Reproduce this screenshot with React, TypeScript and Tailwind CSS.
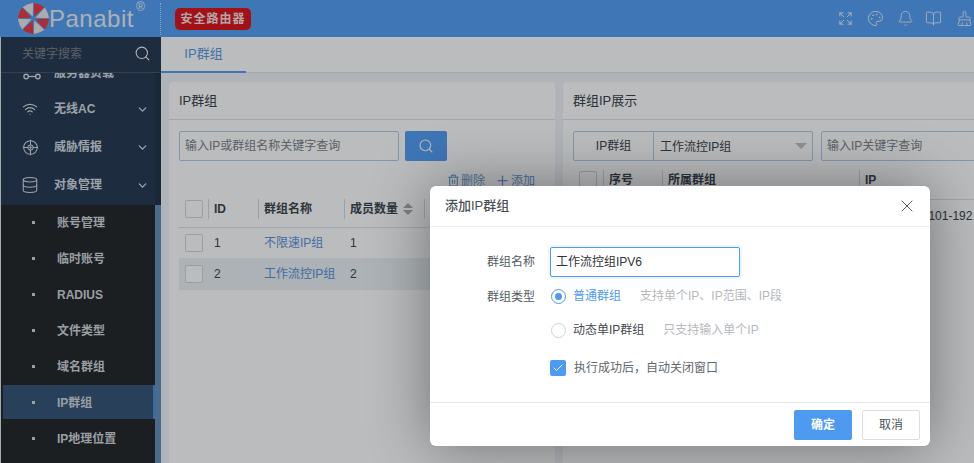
import { BookOpen, Bell, BrushCleaning, ChevronDown, Check, Database, Expand, Palette, Plus, Search, Trash2, Wifi, X } from "lucide-react";

const FONT = "font-['Liberation_Sans','Noto_Sans_CJK_SC',sans-serif]";

const Logo = () => (
  <svg viewBox="-16 -16 32 32" className="w-[31px] h-[31px]">
    {[0, 45, 90, 135, 180, 225, 270, 315].map((a, i) => (
      <path
        key={a}
        transform={`rotate(${a - 22.5})`}
        d="M0 -2.2 L-6 -15 Q0 -16.5 6 -15 Z"
        fill={i % 2 === 0 ? "#e8e8ea" : "#f03a42"}
      />
    ))}
  </svg>
);

const TargetIcon = () => (
  <svg viewBox="0 0 20 20" className="w-[17px] h-[17px]" fill="none" stroke="currentColor" strokeWidth="1.2">
    <circle cx="10" cy="10" r="8" />
    <circle cx="10" cy="10" r="3" />
    <path d="M10 1v6M10 13v6M1 10h6M13 10h6" />
    <circle cx="10" cy="10" r="0.8" fill="currentColor" />
  </svg>
);

const LinkIcon = () => (
  <svg viewBox="0 0 20 10" className="w-[18px] h-[9px]" fill="none" stroke="currentColor" strokeWidth="1.5">
    <circle cx="3.5" cy="5" r="2.5" />
    <circle cx="16.5" cy="5" r="2.5" />
    <path d="M6 5h8" />
  </svg>
);

const SUB_MENU = ["账号管理", "临时账号", "RADIUS", "文件类型", "域名群组", "IP群组", "IP地理位置"];

const Box = () => <span className="block w-[18px] h-[18px] rounded-[2px] border border-[#d4d6d9] bg-white" />;

const SortCarets = () => (
  <span className="inline-flex flex-col gap-[2px] ml-[5px] align-middle">
    <span className="w-0 h-0 border-x-[5px] border-x-transparent border-b-[5px] border-b-[#a8adb3]" />
    <span className="w-0 h-0 border-x-[5px] border-x-transparent border-t-[5px] border-t-[#a8adb3]" />
  </span>
);

const Sidebar = () => (
  <aside className="relative w-[161px] shrink-0 flex flex-col h-full bg-[#293b51] overflow-hidden border-l border-[#e4e8ec]">
    <div className="h-[36px] shrink-0 flex items-center justify-between pl-[21px] pr-[10px] pb-[2px] border-b border-[#4b5560]">
      <span className="text-[12px] text-[#7d8389]">关键字搜索</span>
      <Search size={17} strokeWidth={1.5} className="text-[#f2f4f6]" />
    </div>
    <div className="flex-1 flex min-h-0">
      <div className="w-[154px] shrink-0 overflow-hidden">
        <div className="h-[17px] text-[#d6dce2] text-[12px] font-semibold relative">
          <span className="absolute left-[22px] -top-[1px]"><LinkIcon /></span>
          <span className="absolute left-[53px] -top-[12px] leading-[24px]">服务器负载</span>
        </div>
        {[
          ["无线AC", <Wifi key="w" size={16} strokeWidth={1.7} />],
          ["威胁情报", <TargetIcon key="t" />],
          ["对象管理", <Database key="d" size={18} strokeWidth={1.4} />],
        ].map(([label, icon]) => (
          <div key={label as string} className="h-[38px] flex items-center text-[#d6dce2] text-[12px] font-semibold">
            <span className="w-[53px] flex justify-center pl-[8px] pr-[3px]">{icon}</span>
            <span className="flex-1">{label}</span>
            <ChevronDown size={13} strokeWidth={2.5} className="mr-[6px]" />
          </div>
        ))}
        <div className="bg-[#25282a] h-[280px] mt-[1px]">
          {SUB_MENU.map((m) => (
            <div
              key={m}
              className={`h-[34px] mb-[2px] pt-[1px] flex items-center text-[12px] font-semibold text-[#d2d6da] ${
                m === "IP群组" ? "bg-[#395576] border-r-2 border-[#4f8fd8] ml-[2px]" : ""
              }`}
            >
              <span className={`w-[3px] h-[3px] bg-[#d6dade] ${m === "IP群组" ? "ml-[29px]" : "ml-[31px]"}`} />
              <span className="ml-[22px]">{m}</span>
            </div>
          ))}
        </div>
      </div>
      <div className="flex-1 flex flex-col">
        <div className="h-[132px] bg-[#243347]" />
        <div className="flex-1 bg-[#668fbe]" />
      </div>
    </div>
  </aside>
);

const PanelHead = ({ title }: { title: string }) => (
  <div className="h-[38px] border-b border-[#dfe3e8] pl-[10px] flex items-center text-[13px] text-[#3c4248]">{title}</div>
);

const LeftPanel = () => (
  <section className="w-[386px] shrink-0 bg-white rounded-[4px] h-[420px]">
    <PanelHead title="IP群组" />
    <div className="flex gap-[6px] pl-[10px] pt-[11px]">
      <div className="w-[220px] h-[30px] border border-[#b6cbe6] rounded-[2px] flex items-center pl-[5px] text-[12px] text-[#7d8388]">
        输入IP或群组名称关键字查询
      </div>
      <button className="w-[42px] h-[30px] rounded-[2px] bg-[#56a0f4] flex items-center justify-center text-white">
        <Search size={16} strokeWidth={1.6} />
      </button>
    </div>
    <div className="h-[27px] flex items-center justify-end pr-[20px] text-[12px] text-[#6f9bd4] gap-[10px] pt-[12px]">
      <span className="flex items-center gap-[1px]"><Trash2 size={13} />删除</span>
      <span className="flex items-center gap-[1px]"><Plus size={15} />添加</span>
    </div>
    <div className="ml-[10px] mr-[10px] mt-[2px] text-[12px] text-[#40464c]">
      <div className="h-[38px] grid grid-cols-[29px_50px_86px_80px_1fr] items-center border-b border-[#dfe3e8] font-semibold">
        <span className="pl-[6px]"><Box /></span>
        <span className="pl-[5px] border-l border-[#d8dbe0] h-[20px] leading-[20px]">ID</span>
        <span className="pl-[5px] border-l border-[#d8dbe0] h-[20px] leading-[20px]">群组名称</span>
        <span className="pl-[5px] border-l border-[#d8dbe0] h-[20px] leading-[20px]">
          成员数量
          <SortCarets />
        </span>
        <span className="border-l border-[#d8dbe0] h-[20px]" />
      </div>
      {[
        { id: "1", name: "不限速IP组", n: "1", bg: "h-[30px]" },
        { id: "2", name: "工作流控IP组", n: "2", bg: "bg-[#ecf1f3] h-[32px]" },
      ].map((r) => (
        <div key={r.id} className={`grid grid-cols-[29px_50px_86px_80px_1fr] items-center ${r.bg}`}>
          <span className="pl-[6px]"><Box /></span>
          <span className="pl-[6px]">{r.id}</span>
          <span className="pl-[6px] text-[#5d93d8]">{r.name}</span>
          <span className="pl-[6px]">{r.n}</span>
          <span />
        </div>
      ))}
    </div>
  </section>
);

const RightPanel = () => (
  <section className="w-[500px] shrink-0 bg-white rounded-[4px] h-[420px]">
    <PanelHead title="群组IP展示" />
    <div className="flex gap-[8px] pl-[10px] pt-[11px]">
      <div className="w-[240px] h-[30px] border border-[#b6cbe6] rounded-[2px] flex items-center text-[12px] text-[#40464c]">
        <span className="w-[80px] h-full border-r border-[#b6cbe6] flex items-center justify-center">IP群组</span>
        <span className="flex-1 pl-[6px] pt-[2px]">工作流控IP组</span>
        <span className="mr-[5px] w-0 h-0 border-x-[6px] border-x-transparent border-t-[6px] border-t-[#c0c4c8]" />
      </div>
      <div className="w-[240px] h-[30px] border border-[#b6cbe6] rounded-[2px] flex items-center pl-[5px] text-[12px] text-[#7d8388]">
        输入IP关键字查询
      </div>
    </div>
    <div className="ml-[16px] text-[12px] text-[#40464c]">
      <div className="h-[39px] grid grid-cols-[24px_59px_197px_1fr] items-center border-b border-[#dfe3e8] font-semibold">
        <Box />
        <span className="pl-[5px] border-l border-[#d8dbe0] h-[20px] leading-[20px]">序号</span>
        <span className="pl-[5px] border-l border-[#d8dbe0] h-[20px] leading-[20px]">所属群组</span>
        <span className="pl-[5px] border-l border-[#d8dbe0] h-[20px] leading-[20px]">IP</span>
      </div>
      <div className="h-[32px] grid grid-cols-[24px_59px_197px_1fr] items-center">
        <span />
        <span />
        <span />
        <span className="pl-[6px] whitespace-nowrap">192.168.10.101-192.168.10.200</span>
      </div>
    </div>
  </section>
);

const Modal = () => (
  <div className="absolute left-[430px] top-[186px] w-[500px] h-[260px] bg-white rounded-[6px] shadow-[0_0_60px_rgba(0,0,0,0.4)] text-[12px] text-[#555b61] flex flex-col">
    <div className="h-[41px] shrink-0 border-b border-[#eceef0] pl-[15px] pr-[13px] flex items-center justify-between">
      <span className="text-[13px] font-medium text-[#4a4f55]">添加IP群组</span>
      <X size={20} strokeWidth={1} className="text-[#33383d]" />
    </div>
    <div className="flex-1 pl-[45px] pt-[20px]">
      <div className="flex items-center h-[30px]">
        <span className="w-[60px] text-right">群组名称</span>
        <div className="ml-[15px] w-[190px] h-[30px] rounded-[2px] border border-[#4d9af0] shadow-[0_0_0_2px_rgba(77,154,240,0.1)] pl-[5px] flex items-center text-[#2f3338]">
          工作流控组IPV6
        </div>
      </div>
      <div className="flex items-center h-[20px] mt-[9px]">
        <span className="w-[60px] text-right pt-[2px]">群组类型</span>
        <span className="ml-[16px] w-[15px] h-[15px] rounded-full border-[1.5px] border-[#4d9af0] flex items-center justify-center">
          <span className="w-[7px] h-[7px] rounded-full bg-[#4d9af0]" />
        </span>
        <span className="ml-[7px] text-[#4d9af0]">普通群组</span>
        <span className="ml-[19px] text-[#b5b8bb]">支持单个IP、IP范围、IP段</span>
      </div>
      <div className="flex items-center h-[20px] mt-[14px] pl-[76px]">
        <span className="w-[15px] h-[15px] rounded-full border-[1.5px] border-[#cfd1d3]" />
        <span className="ml-[7px] text-[#44494e]">动态单IP群组</span>
        <span className="ml-[19px] text-[#b5b8bb]">只支持输入单个IP</span>
      </div>
      <div className="flex items-center h-[16px] mt-[20px] pl-[75px]">
        <span className="w-[16px] h-[16px] rounded-[2px] bg-[#4d9af0] flex items-center justify-center text-white">
          <Check size={12} strokeWidth={1.8} />
        </span>
        <span className="ml-[8px] text-[#62676c]">执行成功后，自动关闭窗口</span>
      </div>
    </div>
    <div className="h-[44px] shrink-0 border-t border-[#e6e8ea] flex items-start justify-end gap-[10px] pt-[7px] pr-[10px]">
      <button className="w-[58px] h-[30px] rounded-[2px] bg-[#4d9af0] text-white font-semibold">确定</button>
      <button className="w-[58px] h-[30px] rounded-[2px] border border-[#dcdee0] text-[#4e5358]">取消</button>
    </div>
  </div>
);

const App = () => (
  <div className={`relative w-[974px] h-[463px] overflow-hidden bg-[#f1f4f7] ${FONT}`}>
    <header className="h-[37px] bg-[#56a0f4] flex items-center">
      <div className="w-[161px] shrink-0 flex items-center pl-[18px] border-r border-dotted border-[#c8dcf2] h-[32px]">
        <Logo />
        <span className="text-[24px] leading-none tracking-[0.5px] text-[#eceff3] font-['Liberation_Sans']">Panabit</span>
        <span className="self-start text-[12px] leading-none text-[#eceff3] ml-[2px] -mt-[2px]">®</span>
      </div>
      <span className="ml-[14px] h-[22px] w-[76px] rounded-[5px] bg-[#e0141a] text-[#f3e0e0] text-[12px] font-semibold tracking-[1px] flex items-center justify-center">
        安全路由器
      </span>
      <div className="ml-auto flex items-center text-[#f0f2f5] pr-[1px]">
        <Expand size={15} strokeWidth={1.6} />
        <Palette size={17} strokeWidth={1.3} className="ml-[14px]" />
        <Bell size={17} strokeWidth={1.2} className="ml-[13px]" />
        <BookOpen size={17} strokeWidth={1.2} className="ml-[11px]" />
        <BrushCleaning size={17} strokeWidth={1.2} className="ml-[14px]" />
      </div>
    </header>
    <div className="flex h-[426px]">
      <Sidebar />
      <main className="flex-1 min-w-0 overflow-hidden">
        <div className="h-[36px] bg-white border-b border-[#dfe3e8] flex">
          <span className="w-[85px] h-[36px] border-b-2 border-[#56a0f4] text-[13px] text-[#5d9ae0] flex items-center justify-center">IP群组</span>
        </div>
        <div className="flex gap-[8px] pl-[8px] pt-[9px]">
          <LeftPanel />
          <RightPanel />
        </div>
      </main>
    </div>
    <div className="absolute inset-0 bg-[rgba(0,8,16,0.27)]" />
    <Modal />
  </div>
);

export default App;
